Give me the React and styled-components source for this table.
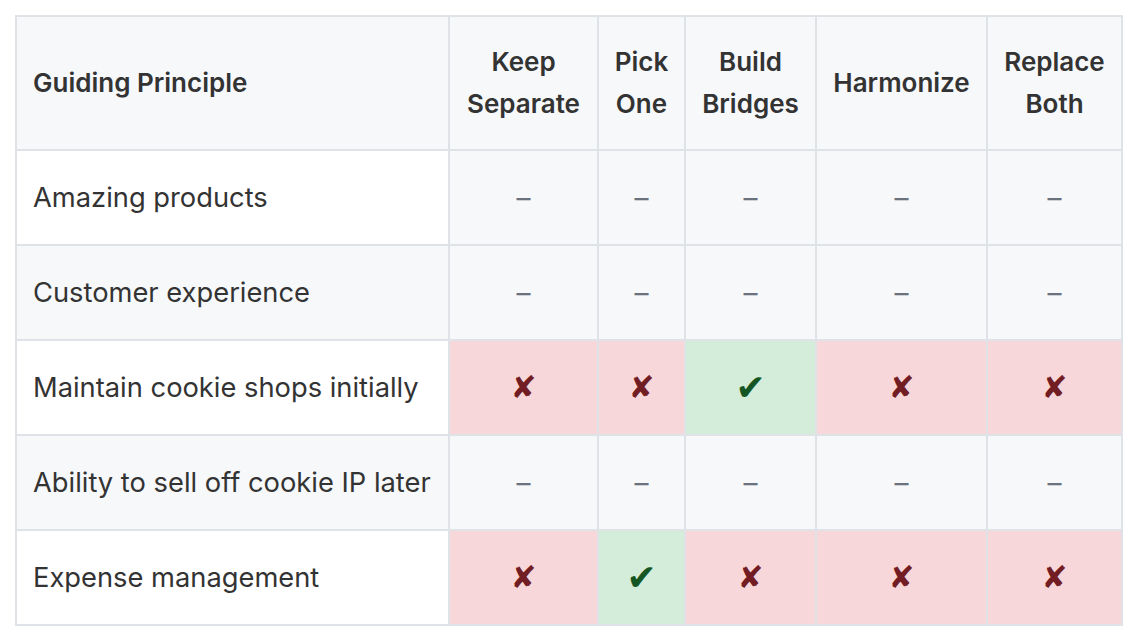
import React from "react";
import styled, { createGlobalStyle, css } from "styled-components";

const GlobalStyle = createGlobalStyle`
  html, body { margin: 0; padding: 0; background: #ffffff; }
  body { font-family: Inter, "Noto Sans", sans-serif; color: #333333; }
`;

const Page = styled.div`
  padding: 15px;
`;

const Grid = styled.div`
  display: grid;
  grid-template-columns: 431px 147px 85px 129px 169px 133px;
  grid-template-rows: 132px repeat(5, 93px);
  gap: 2px;
  padding: 2px;
  width: max-content;
  background: #dfe2e6;
  font-size: 27.3px;
  line-height: 42px;
`;

const Cell = styled.div`
  display: flex;
  align-items: center;
  padding: 0 16px;
  min-width: 0;
`;

const HeaderCell = styled(Cell)`
  background: #f6f8fa;
  font-weight: 600;
  font-size: 26px;
  color: #333333;
  justify-content: ${(p) => (p.$left ? "flex-start" : "center")};
  text-align: ${(p) => (p.$left ? "left" : "center")};
`;

const LabelCell = styled(Cell)`
  background: ${(p) => (p.$striped ? "#f6f8fa" : "#ffffff")};
  color: #333333;
  white-space: nowrap;
`;

const statusStyles = {
  none: css`
    background: #f6f8fa;
    color: #6a737d;
  `,
  no: css`
    background: #f8d7da;
    color: #721c24;
  `,
  yes: css`
    background: #d4edda;
    color: #155724;
  `,
};

const StatusCell = styled(Cell)`
  justify-content: center;
  ${(p) => statusStyles[p.$status]}
`;

const Mark = styled.span`
  font-family: "DejaVu Sans", sans-serif;
  font-size: ${(p) => (p.$status === "yes" ? "36px" : "31px")};
  font-weight: 700;
  line-height: 1;
`;

const Dash = styled.span`
  font-family: Inter, sans-serif;
  font-size: 28px;
  font-weight: 400;
  line-height: 1;
`;

const columns = ["Keep Separate", "Pick One", "Build Bridges", "Harmonize", "Replace Both"];

const rows = [
  { label: "Amazing products", values: ["none", "none", "none", "none", "none"] },
  { label: "Customer experience", values: ["none", "none", "none", "none", "none"] },
  { label: "Maintain cookie shops initially", values: ["no", "no", "yes", "no", "no"] },
  { label: "Ability to sell off cookie IP later", values: ["none", "none", "none", "none", "none"] },
  { label: "Expense management", values: ["no", "yes", "no", "no", "no"] },
];

const glyph = { no: "✘", yes: "✔" };

export default function App() {
  return (
    <Page>
      <GlobalStyle />
      <Grid role="table">
        <HeaderCell $left role="columnheader">Guiding Principle</HeaderCell>
        {columns.map((c) => (
          <HeaderCell key={c} role="columnheader">{c}</HeaderCell>
        ))}
        {rows.map((r, i) => (
          <React.Fragment key={r.label}>
            <LabelCell $striped={i % 2 === 1} role="cell">{r.label}</LabelCell>
            {r.values.map((v, j) => (
              <StatusCell key={j} $status={v} role="cell">
                {v === "none" ? <Dash>–</Dash> : <Mark $status={v}>{glyph[v]}</Mark>}
              </StatusCell>
            ))}
          </React.Fragment>
        ))}
      </Grid>
    </Page>
  );
}
